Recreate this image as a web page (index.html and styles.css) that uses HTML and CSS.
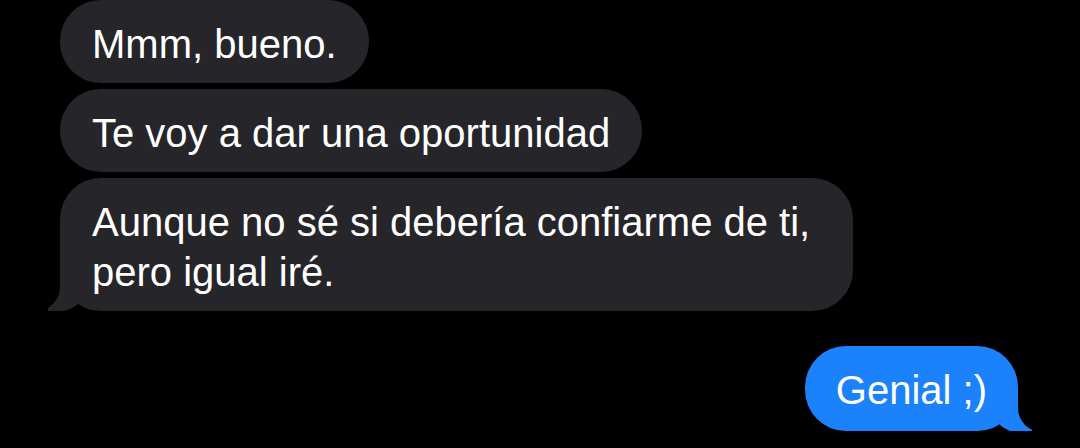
FILE: index.html
```html
<!DOCTYPE html>
<html lang="es">
<head>
    <meta charset="UTF-8">
    <meta name="viewport" content="width=device-width, initial-scale=1.0">
    <title>Mensajes</title>
    <link rel="stylesheet" href="styles.css">
</head>
<body>
    <div class="thread">
        <div class="bubble theirs">Mmm, bueno.</div>
        <div class="bubble theirs">Te voy a dar una oportunidad</div>
        <div class="bubble theirs tail">Aunque no sé si debería confiarme de ti, pero igual iré.</div>
        <div class="bubble mine tail">Genial ;)</div>
    </div>
</body>
</html>
```

FILE: styles.css
```css
body { margin: 0; background: #000; font-family: "Liberation Sans", Arial, sans-serif; }
.thread { display: flex; flex-direction: column; gap: 6px; padding: 0 62px 0 60px; }
.bubble { position: relative; z-index: 0; box-sizing: border-box; max-width: 793px; padding: 19px 32px 14px 32px; border-radius: 41px; font-size: 40px; line-height: 50px; color: #fff; }
.theirs { align-self: flex-start; background: #26252a; }
.mine { align-self: flex-end; margin-top: 29px; padding: 19px 31px 16px 31px; background: #1b82fb; }

/* bubble tails */
.tail::before, .tail::after { content: ""; position: absolute; z-index: -1; bottom: 0; height: 42px; }
.theirs.tail::before { left: -12px; border-left: 40px solid #26252a; border-bottom-right-radius: 28px 30px; }
.theirs.tail::after { left: -40px; width: 40px; background: #000; border-bottom-right-radius: 24px; }
.mine.tail::before { right: -14px; bottom: -1px; border-right: 42px solid #1b82fb; border-bottom-left-radius: 28px 30px; }
.mine.tail::after { right: -40px; bottom: -1px; width: 40px; background: #000; border-bottom-left-radius: 24px; }
```
